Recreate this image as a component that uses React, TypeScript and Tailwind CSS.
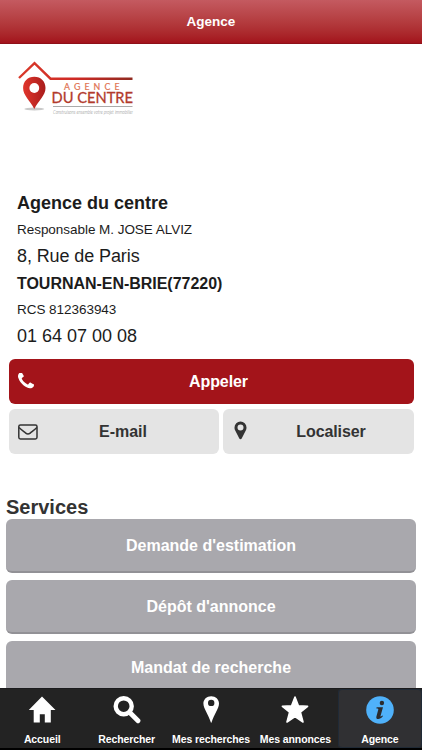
import type { ReactNode } from "react";

const PHONE_PATH =
  "M1600 1240q0 27-10 70.5t-21 68.5q-21 50-122 106-94 51-186 51-27 0-53-3.5t-57.5-12.5-47-14.5-55.5-20.5-49-18q-98-35-175-83-127-79-264-216t-216-264q-48-77-83-175-3-9-18-49t-20.5-55.5-14.5-47-12.5-57.5-3.5-53q0-92 51-186 56-101 106-122 25-11 68.5-21t70.5-10q14 0 21 3 18 6 53 76 11 19 30 54t35 63.5 31 53.5q3 4 17.5 25t21.5 35.5 7 28.5q0 20-28.5 50t-62 55-62 53-28.5 46q0 9 5 22.5t8.5 20.5 14 24 11.5 19q76 137 174 235t235 174q2 1 19 11.5t24 14 20.5 8.5 22.5 5q18 0 46-28.5t53-62 55-62 50-28.5q14 0 28.5 7t35.5 21.5 25 17.5q25 15 53.5 31t63.5 35 54 30q70 35 76 53 3 7 3 21z";

const SERVICES = ["Demande d'estimation", "Dépôt d'annonce", "Mandat de recherche"];

interface Tab { label: string; icon: ReactNode; active?: boolean; }

const TABS: Tab[] = [
  { label: "Accueil", icon: <HomeIcon /> },
  { label: "Rechercher", icon: <SearchIcon /> },
  { label: "Mes recherches", icon: <PinIcon /> },
  { label: "Mes annonces", icon: <StarIcon /> },
  { label: "Agence", icon: <InfoIcon />, active: true },
];

function HomeIcon() {
  return (
    <svg width="28" height="28" viewBox="0 0 28 28" fill="#fff">
      <path d="M14 0.5 27.5 14H22.800v12.400h-6v-8.200h-5v8.200H5.700V14H0.800z" />
    </svg>
  );
}

function SearchIcon() {
  return (
    <svg width="28" height="28" viewBox="0 0 28 28" fill="none" stroke="#fff">
      <circle cx="10.700" cy="10.200" r="8" strokeWidth="4.400" />
      <path d="M17 16.800 25 24.800" strokeWidth="4.800" strokeLinecap="round" />
    </svg>
  );
}

function PinIcon() {
  return (
    <svg width="28" height="28" viewBox="0 0 28 28" fill="#fff" fillRule="evenodd">
      <path d="M14.200 0.200c4.500 0 7.800 3.100 7.800 7.400 0 5-5 11-7.400 18.700q-.4 1-.8 0C11.400 18.600 6.400 12.600 6.400 7.600c0-4.300 3.300-7.400 7.800-7.400zM14.200 3.700a3.200 3.200 0 1 0 0 6.400 3.200 3.200 0 0 0 0-6.400z" />
    </svg>
  );
}

function StarIcon() {
  return (
    <svg width="28" height="28" viewBox="0 0 28 28" fill="#fff" stroke="#fff" strokeWidth="1.600" strokeLinejoin="round">
      <path d="M14 1 17.400 9.900 26.600 10.300 19.400 16.200 22 26 14 20.600 6 26 8.600 16.200 1.400 10.300 10.600 9.900z" />
    </svg>
  );
}

function InfoIcon() {
  return (
    <svg width="28" height="28" viewBox="0 0 28 28">
      <circle cx="14" cy="14" r="13.800" fill="#4fb1fa" />
      <g fill="#2b2b2e">
        <circle cx="15.900" cy="7" r="2.200" />
        <path d="M10.600 11.300h6.400l-2.500 8.600c-.2.900.3.900 1.800-.5l.7.700c-1.700 2.200-3.200 2.900-4.700 2.900-1.700 0-2.300-1-1.900-2.600l1.900-6.800c.2-.8-.1-1.200-1.900-1.200z" />
      </g>
    </svg>
  );
}

function MarkerIcon() {
  return (
    <svg width="13" height="19" viewBox="0 0 13 19" fill="#333" fillRule="evenodd" className="mb-[3px]">
      <path d="M6.500 0.500a6 6 0 0 1 6 6c0 1.300-.2 2-.6 2.800L7.700 17.400c-.5 1-1.900 1-2.400 0L1.100 9.300C.7 8.500.5 7.800.5 6.500a6 6 0 0 1 6-6zm0 3a3 3 0 1 0 0 6 3 3 0 0 0 0-6z" />
    </svg>
  );
}

function MailIcon() {
  return (
    <svg width="20" height="16" viewBox="0 0 20 16" fill="none" stroke="#333" strokeWidth="1.500">
      <rect x="0.800" y="0.900" width="18.200" height="14" rx="1.600" />
      <path d="M1 3.600c2 2.100 4.700 3.900 6.700 5.500 1.500 1.200 3 1.200 4.500 0 2-1.600 4.700-3.400 6.700-5.500" />
    </svg>
  );
}

function Logo() {
  return (
    <svg width="125" height="62" viewBox="0 0 125 62" className="block overflow-visible">
      <defs>
        <linearGradient id="roof" gradientUnits="userSpaceOnUse" x1="0" x2="116" y1="0" y2="0">
          <stop offset="0" stopColor="#d93a2a" />
          <stop offset="0.500" stopColor="#cf2a25" />
          <stop offset="1" stopColor="#8f2a20" />
        </linearGradient>
        <linearGradient id="pin" x1="0" x2="1">
          <stop offset="0" stopColor="#e0352c" />
          <stop offset="1" stopColor="#a91d1c" />
        </linearGradient>
      </defs>
      <path d="M2 19 17.500 4.200 33.500 19.700H115.500" fill="none" stroke="url(#roof)" strokeWidth="2.400" />
      <ellipse cx="17.300" cy="50" rx="10" ry="1.500" fill="#c9c9c9" />
      <path d="M17.300 17.800c6.600 0 11.200 4.800 11.200 11.200 0 7.500-6.700 12-11.200 21C12.800 41 6.100 36.500 6.100 29c0-6.400 4.600-11.200 11.200-11.200z" fill="url(#pin)" />
      <circle cx="17.300" cy="29" r="4.900" fill="#fff" />
      <text x="47" y="31" fontFamily="Lato, sans-serif" fontSize="8.800" fill="#e0714f" stroke="#e0714f" strokeWidth="0.200" textLength="55.500" lengthAdjust="spacing">AGENCE</text>
      <text x="34.500" y="44" fontFamily="Lato, sans-serif" fontSize="15.500" fill="#b23a2c" stroke="#b23a2c" strokeWidth="0.300" textLength="81.500" lengthAdjust="spacingAndGlyphs">DU CENTRE</text>
      <path d="M36 47.500H115.500" stroke="#aaa" strokeWidth="1" />
      <text x="36" y="54.800" fontFamily="Lato, sans-serif" fontStyle="italic" fontWeight="300" fontSize="5" fill="#777" textLength="80" lengthAdjust="spacingAndGlyphs">Construisons ensemble votre projet immobilier</text>
    </svg>
  );
}

export default function App() {
  return (
    <div className="flex h-[750px] w-[422px] flex-col overflow-hidden bg-white font-['Liberation_Sans',sans-serif] text-[#1c1c1c]">
      <header className="flex h-11 shrink-0 items-center justify-center border-b border-[#8e1118] bg-linear-to-b from-[#c45a60] to-[#a3121b] pt-[2px] text-[13.5px] font-bold text-white">
        Agence
      </header>

      <main className="flex min-h-0 flex-1 flex-col overflow-hidden">
        <div className="h-[145px] shrink-0 pt-[15px] pl-[17px]">
          <Logo />
        </div>

        {/* Agency details */}
        <div className="shrink-0 pl-[17px]">
          <p className="h-[27px] pt-px text-lg/[27px] font-bold">Agence du centre</p>
          <p className="h-[27px] text-[13.5px]/[27px] tracking-[-0.04px]">Responsable M. JOSE ALVIZ</p>
          <p className="h-[27px] text-lg/[27px] tracking-[-0.1px]">8, Rue de Paris</p>
          <p className="h-[27px] text-base/[27px] font-bold tracking-[-0.03px]">TOURNAN-EN-BRIE(77220)</p>
          <p className="h-[26px] text-[13.5px]/[26px] tracking-[-0.04px]">RCS 812363943</p>
          <p className="h-[27px] text-lg/[27px]">01 64 07 00 08</p>
        </div>

        {/* Contact buttons */}
        <div className="mt-[9px] flex shrink-0 flex-col gap-[5px] pr-[8.5px] pl-[8.5px] text-base font-bold">
          <button className="flex h-[45px] items-center rounded-md bg-[#a3141a] pl-[9px] text-white">
            <svg width="16" height="16" viewBox="192 256 1408 1280" fill="#fff" className="mb-[2px] shrink-0">
              <path d={PHONE_PATH} />
            </svg>
            <span className="flex-1 pr-[10px] text-center tracking-[-0.1px]">Appeler</span>
          </button>
          <div className="flex gap-1 text-[#333]">
            <button className="flex h-[45px] w-[210px] items-center rounded-md bg-[#e4e4e4] pl-[9px]">
              <MailIcon />
              <span className="flex-1 pr-[10px] text-center">E-mail</span>
            </button>
            <button className="flex h-[45px] flex-1 items-center rounded-md bg-[#e4e4e4] pl-[11px]">
              <MarkerIcon />
              <span className="flex-1 pl-[2px] text-center tracking-[-0.1px]">Localiser</span>
            </button>
          </div>
        </div>

        <h2 className="mt-[39px] h-[26px] shrink-0 pl-[6px] text-xl/[28px] font-bold text-[#333]">Services</h2>
        <div className="flex shrink-0 flex-col gap-[7px] px-[6px]">
          {SERVICES.map((service) => (
            <button key={service} className="h-[54px] rounded-md border-b-2 border-[#929196] bg-[#a9a8ad] pt-[2px] text-base font-bold text-white">
              {service}
            </button>
          ))}
        </div>
      </main>

      <nav className="flex h-[62px] shrink-0 border-t border-b-2 border-t-[#1b1b1d] border-b-black bg-[#232323]">
        {TABS.map((tab) => (
          <div
            key={tab.label}
            className={`flex flex-1 basis-0 flex-col items-center pt-[7px] text-[10.5px] font-bold tracking-[-0.1px] whitespace-nowrap text-white ${tab.active ? "rounded-sm bg-[#303033] ring-1 ring-[#202a36] ring-inset" : ""}`}
          >
            {tab.icon}
            <span className="mt-[7px] leading-4">{tab.label}</span>
          </div>
        ))}
      </nav>
    </div>
  );
}
